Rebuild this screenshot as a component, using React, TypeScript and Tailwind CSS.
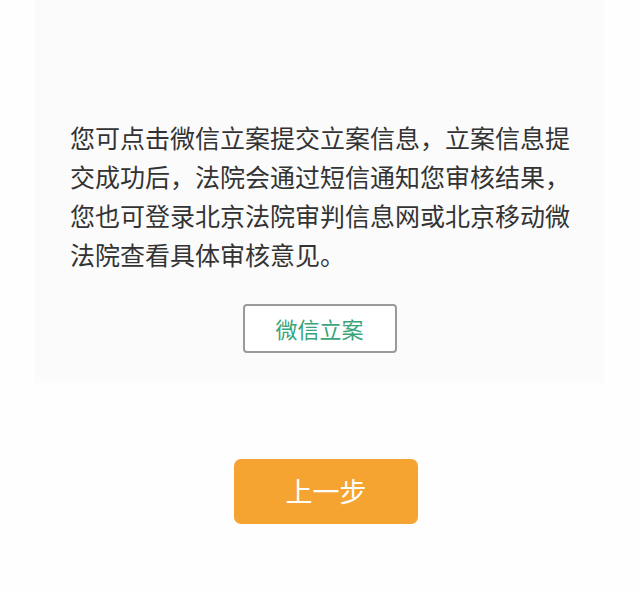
import React from 'react';

export default function App() {
  return (
    <div
      className="w-[640px] h-[590px] bg-[#fefefe] overflow-hidden"
      style={{ fontFamily: '"Noto Sans CJK SC", "Noto Sans", sans-serif' }}
    >
      <div className="ml-[35px] w-[569px] h-[383px] bg-[#fbfbfb] pt-[118px] flex flex-col">
        <p className="ml-[35px] w-[502px] text-[25px] leading-[39px] text-[#333333]">
          您可点击微信立案提交立案信息，立案信息提交成功后，法院会通过短信通知您审核结果，您也可登录北京法院审判信息网或北京移动微法院查看具体审核意见。
        </p>
        <button className="self-center mt-[30px] w-[154px] h-[49px] border-2 border-[#9a9a9a] rounded-[4px] bg-white text-[22px] text-[#3aa57a] flex items-center justify-center">
          微信立案
        </button>
      </div>
      <button className="ml-[234px] mt-[76px] w-[184px] h-[65px] rounded-[7px] bg-[#f5a331] text-white text-[27px] flex items-center justify-center">
        上一步
      </button>
    </div>
  );
}
